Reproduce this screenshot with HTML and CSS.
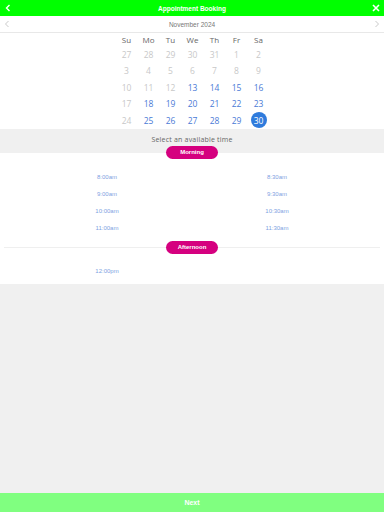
FILE: index.html
```html
<!DOCTYPE html>
<html lang="en">
<head>
  <meta charset="UTF-8" />
  <title>Appointment Booking</title>
  <link rel="stylesheet" href="styles.css">
</head>
<body>

  <div class="app">
    <header class="topbar">
      <svg class="icon" width="8" height="8" viewBox="0 0 8 8"><path d="M5.5 1 L2.5 4 L5.5 7" fill="none" stroke="#fff" stroke-width="1.4"/></svg>
      <span class="title">Appointment Booking</span>
      <svg class="icon" width="8" height="8" viewBox="0 0 8 8"><path d="M1 1 L7 7 M7 1 L1 7" fill="none" stroke="#fff" stroke-width="1.6"/></svg>
    </header>

    <div class="month-nav">
      <svg width="6" height="8" viewBox="0 0 6 8"><path d="M4.5 1 L1.5 4 L4.5 7" fill="none" stroke="#bbb" stroke-width="0.8"/></svg>
      <span>November 2024</span>
      <svg width="6" height="8" viewBox="0 0 6 8"><path d="M1.5 1 L4.5 4 L1.5 7" fill="none" stroke="#bbb" stroke-width="0.8"/></svg>
    </div>

    <div class="calendar" id="calendar">
      <div class="dow">Su</div><div class="dow">Mo</div><div class="dow">Tu</div><div class="dow">We</div><div class="dow">Th</div><div class="dow">Fr</div><div class="dow">Sa</div>
    </div>

    <div class="time-head">Select an available time</div>
    <div class="period"><span class="pill">Morning</span></div>

    <div class="slots">
      <a href="#">8:00am</a><a href="#">8:30am</a>
      <a href="#">9:00am</a><a href="#">9:30am</a>
      <a href="#">10:00am</a><a href="#">10:30am</a>
      <a href="#">11:00am</a><a href="#">11:30am</a>
    </div>

    <div class="period divider"><span class="pill">Afternoon</span></div>

    <div class="slots last">
      <a href="#">12:00pm</a>
    </div>

    <div class="filler"></div>

    <footer class="next">Next</footer>
  </div>

  <script>
    const cal = document.getElementById("calendar");
    const days = [];
    [27, 28, 29, 30, 31].forEach(d => days.push({ d, cls: "off" }));
    for (let d = 1; d <= 30; d++) {
      let cls = d >= 13 ? "on" : "off";
      if (d === 17 || d === 24) cls = "off";
      if (d === 30) cls = "sel";
      days.push({ d, cls });
    }
    days.forEach(day => {
      const div = document.createElement("div");
      div.className = "day " + day.cls;
      div.innerHTML = `<span>${day.d}</span>`;
      cal.appendChild(div);
    });
  </script>

</body>
</html>
```

FILE: styles.css
```css
html, body {
  margin: 0;
  height: 100%;
}
body {
  font-family: 'Open Sans', sans-serif;
  background: #f0f0f0;
}
.app {
  display: flex;
  flex-direction: column;
  height: 512px;
}
.topbar {
  background: #00ff00;
  height: 16px;
  display: flex;
  justify-content: space-between;
  align-items: center;
  padding: 0 4px;
}
.topbar .title {
  color: #fff;
  font-family: 'Liberation Sans', sans-serif;
  font-weight: bold;
  font-size: 6.5px;
}
.icon {
  display: block;
}
.month-nav {
  background: #fff;
  height: 16px;
  border-bottom: 1px solid #e8e8e8;
  display: flex;
  justify-content: space-between;
  align-items: center;
  padding: 0 4px;
  font-family: 'Liberation Sans', sans-serif;
  font-size: 6.5px;
  color: #777;
}
.calendar {
  background: #fff;
  display: grid;
  grid-template-columns: repeat(7, 22px);
  grid-template-rows: 13px;
  grid-auto-rows: 16.5px;
  justify-content: center;
  padding-left: 1px;
}
.dow {
  text-align: center;
  font-size: 8px;
  line-height: 13px;
  color: #666;
}
.day {
  display: flex;
  justify-content: center;
  align-items: center;
  font-size: 8.5px;
}
.day span {
  width: 16px;
  height: 16px;
  border-radius: 50%;
  display: flex;
  justify-content: center;
  align-items: center;
}
.day.off { color: #c8c8c8; }
.day.on { color: #4a7ad6; }
.day.sel span {
  background: #2f7bdc;
  color: #fff;
}
.time-head {
  background: #f0f0f0;
  height: 24px;
  box-sizing: border-box;
  padding-top: 6px;
  text-align: center;
  font-size: 7px;
  color: #666;
  letter-spacing: 0.2px;
}
.period {
  background: #fff;
  display: flex;
  justify-content: center;
  height: 6px;
  position: relative;
}
.pill {
  background: #d5007f;
  color: #fff;
  font-family: 'Liberation Sans', sans-serif;
  font-weight: bold;
  font-size: 6px;
  width: 52px;
  height: 13px;
  line-height: 13px;
  border-radius: 7px;
  text-align: center;
  margin-top: -7px;
  position: relative;
  z-index: 1;
}
.period.divider {
  height: 13px;
  padding: 0 4px;
}
.period.divider::before {
  content: "";
  position: absolute;
  left: 4px;
  right: 4px;
  top: 6px;
  border-top: 1px solid #efefef;
}
.period.divider .pill {
  margin-top: 0;
}
.slots {
  background: #fff;
  display: grid;
  grid-template-columns: 1fr 1fr;
  grid-auto-rows: 17px;
  padding: 10px 22px 4px;
}
.slots a {
  text-align: center;
  line-height: 17px;
  font-family: 'Liberation Sans', sans-serif;
  font-size: 6px;
  color: #809fe2;
  text-decoration: none;
}
.slots.last {
  padding: 9px 22px 4px;
}
.filler {
  flex: 1;
  background: #f0f0f0;
}
.next {
  background: #80ff80;
  height: 19px;
  line-height: 19px;
  text-align: center;
  color: #fff;
  font-family: 'Liberation Sans', sans-serif;
  font-weight: bold;
  font-size: 7px;
}
```
